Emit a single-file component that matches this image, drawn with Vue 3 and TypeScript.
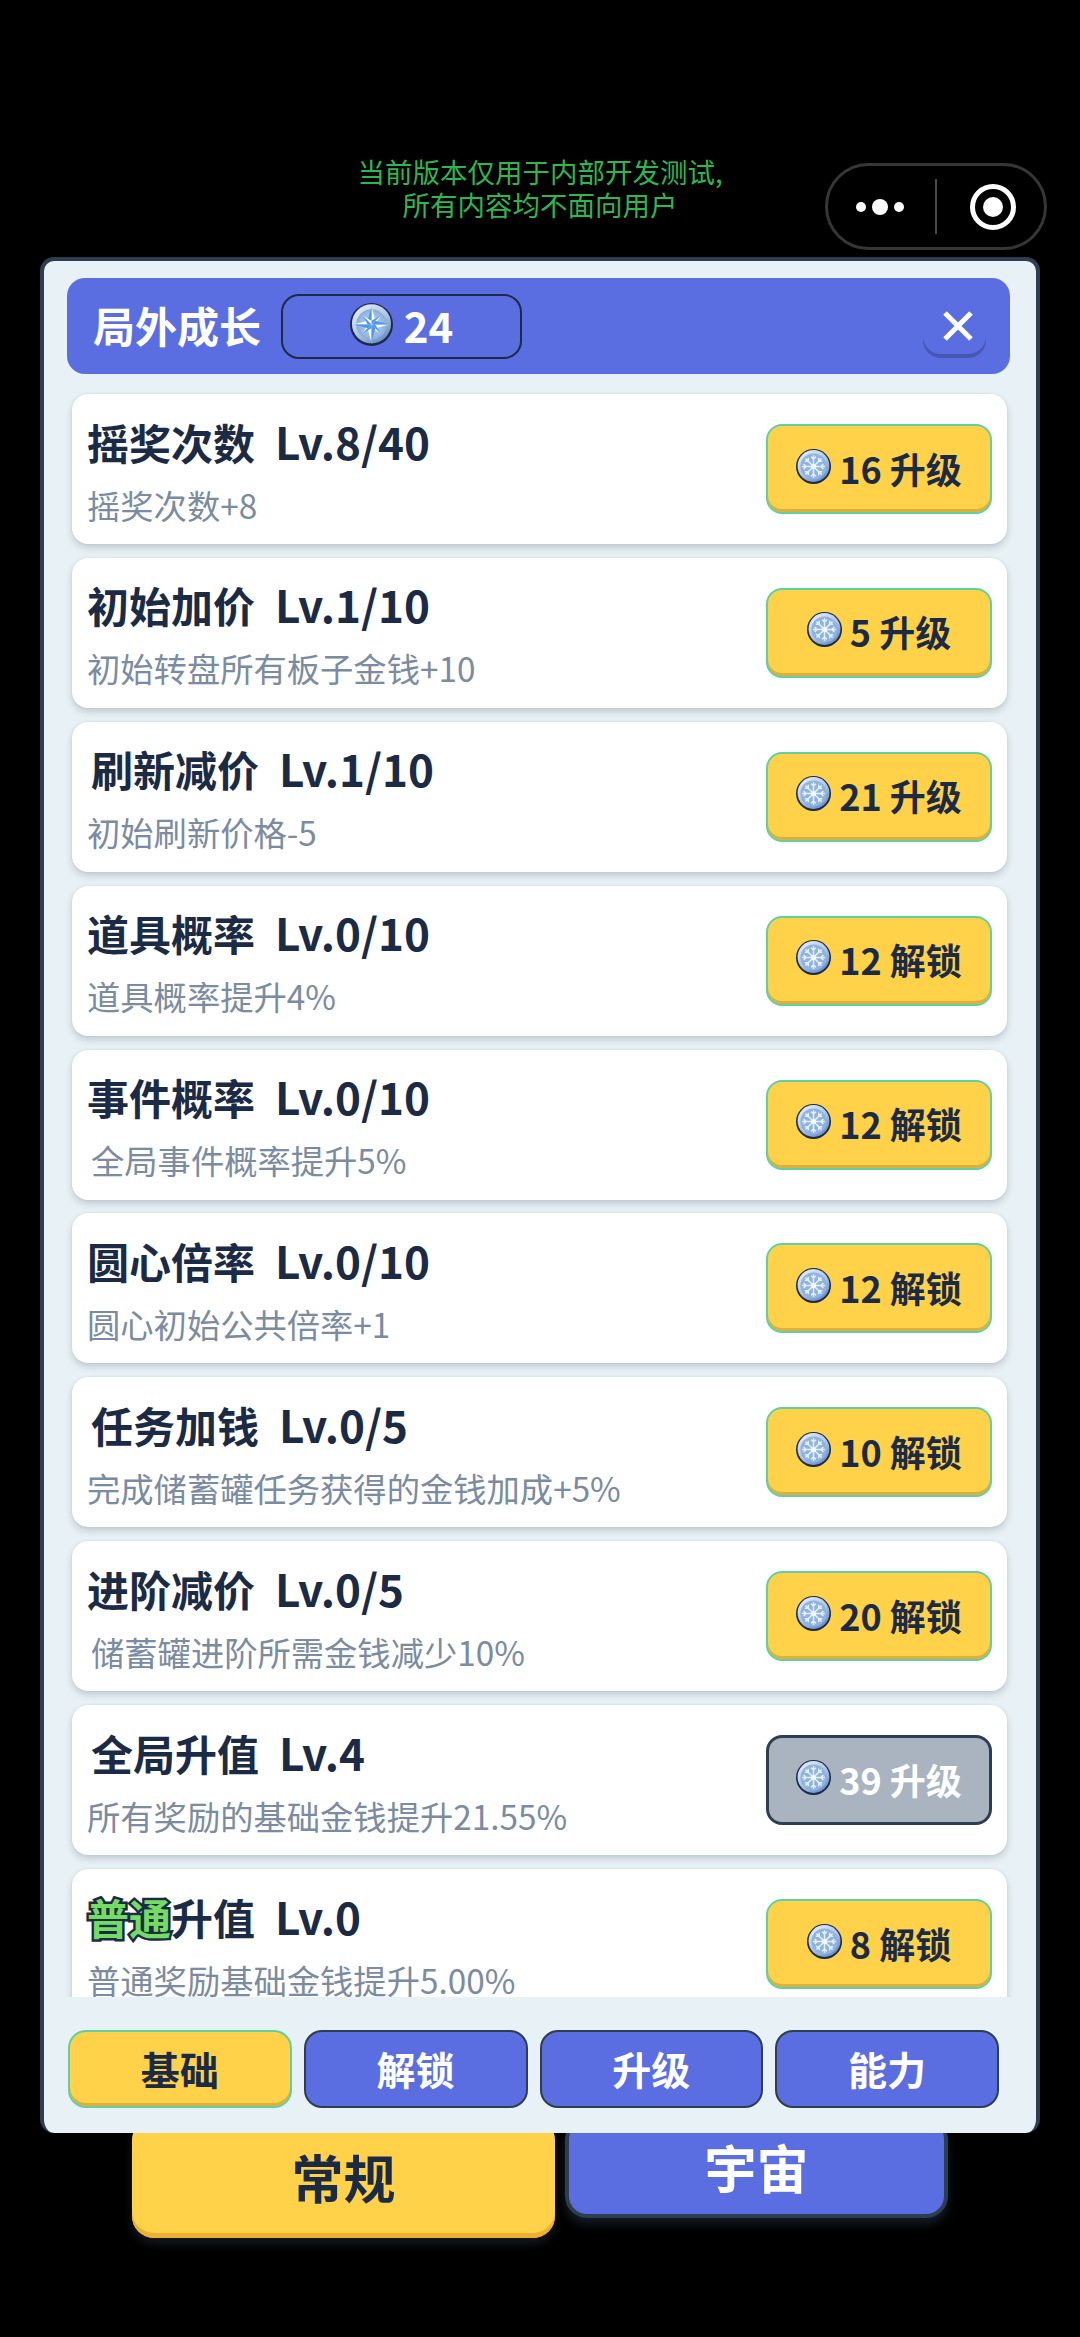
<script setup lang="ts">
interface Upgrade {
  tag?: string
  name: string
  level: string
  desc: string
  cost: number
  action: string
  disabled?: boolean
  shift?: 'title' | 'desc'
}

const upgrades: Upgrade[] = [
  { name: '摇奖次数', level: 'Lv.8/40', desc: '摇奖次数+8', cost: 16, action: '升级' },
  { name: '初始加价', level: 'Lv.1/10', desc: '初始转盘所有板子金钱+10', cost: 5, action: '升级' },
  { name: '刷新减价', level: 'Lv.1/10', desc: '初始刷新价格-5', cost: 21, action: '升级', shift: 'title' },
  { name: '道具概率', level: 'Lv.0/10', desc: '道具概率提升4%', cost: 12, action: '解锁' },
  { name: '事件概率', level: 'Lv.0/10', desc: '全局事件概率提升5%', cost: 12, action: '解锁', shift: 'desc' },
  { name: '圆心倍率', level: 'Lv.0/10', desc: '圆心初始公共倍率+1', cost: 12, action: '解锁' },
  { name: '任务加钱', level: 'Lv.0/5', desc: '完成储蓄罐任务获得的金钱加成+5%', cost: 10, action: '解锁', shift: 'title' },
  { name: '进阶减价', level: 'Lv.0/5', desc: '储蓄罐进阶所需金钱减少10%', cost: 20, action: '解锁', shift: 'desc' },
  { name: '全局升值', level: 'Lv.4', desc: '所有奖励的基础金钱提升21.55%', cost: 39, action: '升级', disabled: true, shift: 'title' },
  { tag: '普通', name: '升值', level: 'Lv.0', desc: '普通奖励基础金钱提升5.00%', cost: 8, action: '解锁' },
]

const tabs = ['基础', '解锁', '升级', '能力']
const activeTab = '基础'
const spokes = [0, 45, 90, 135, 180, 225, 270, 315]
</script>

<template>
  <div class="page">
    <!-- crystal coins: compass star for the balance, snowflake for prices -->
    <svg class="defs" width="0" height="0" aria-hidden="true">
      <defs>
        <linearGradient id="coin-rim" x1="0.15" y1="0" x2="0.85" y2="1">
          <stop offset="0" stop-color="#e6eff8" />
          <stop offset="0.55" stop-color="#a9c2e2" />
          <stop offset="1" stop-color="#5f82bc" />
        </linearGradient>
        <radialGradient id="coin-face" cx="0.5" cy="0.5" r="0.62">
          <stop offset="0" stop-color="#c4dcf6" />
          <stop offset="1" stop-color="#7ba3d8" />
        </radialGradient>
        <symbol id="coin-star" viewBox="0 0 40 40">
          <circle cx="20" cy="20" r="20" fill="#1b2a48" />
          <circle cx="20" cy="19.4" r="18.2" fill="url(#coin-rim)" />
          <circle cx="20" cy="20" r="14.2" fill="url(#coin-face)" />
          <g v-for="angle in spokes" :key="angle" :transform="`rotate(${angle} 20 20)`">
            <path :d="angle % 90 === 0 ? 'M20 3.5 L23.6 16.5 L20 20 Z' : 'M20 8 L22.4 17.5 L20 20 Z'" fill="#ffffff" />
            <path :d="angle % 90 === 0 ? 'M20 3.5 L16.4 16.5 L20 20 Z' : 'M20 8 L17.6 17.5 L20 20 Z'" fill="#4f97ea" />
          </g>
        </symbol>
        <symbol id="coin-flake" viewBox="0 0 40 40">
          <circle cx="20" cy="20" r="20" fill="#1b2a48" />
          <circle cx="20" cy="19.4" r="18.2" fill="url(#coin-rim)" />
          <circle cx="20" cy="20" r="15" fill="#8eb2e2" />
          <g v-for="angle in spokes" :key="angle" :transform="`rotate(${angle} 20 20)`">
            <path d="M20 20 V7 M20 11.5 L17.2 8.8 M20 11.5 L22.8 8.8" stroke="#e6f1fd" stroke-width="1.7" fill="none" />
          </g>
          <circle cx="20" cy="20" r="3" fill="#f4f9ff" />
        </symbol>
      </defs>
    </svg>

    <div class="topbar">
      <div class="notice">当前版本仅用于内部开发测试,<br />所有内容均不面向用户</div>
      <div class="capsule">
        <div class="dots"><i class="dot" /><i class="dot big" /><i class="dot" /></div>
        <div class="divider" />
        <div class="record"><i /></div>
      </div>
    </div>

    <section class="panel">
      <header class="panel-head">
        <h1 class="panel-title">局外成长</h1>
        <div class="balance">
          <svg class="coin-lg"><use href="#coin-star" /></svg>
          <span>24</span>
        </div>
        <button class="close" type="button" aria-label="关闭">
          <svg width="32" height="30" viewBox="0 0 32 30">
            <path d="M3 2 L29 28 M29 2 L3 28" stroke="#fff" stroke-width="5" fill="none" />
          </svg>
        </button>
      </header>

      <div class="list">
        <article v-for="item in upgrades" :key="item.name" class="row">
          <div class="info">
            <div class="title" :class="{ shifted: item.shift === 'title' }">
              <span v-if="item.tag" class="tag">{{ item.tag }}</span><span>{{ item.name }}</span><span class="level">{{ item.level }}</span>
            </div>
            <div class="desc" :class="{ shifted: item.shift === 'desc' }">{{ item.desc }}</div>
          </div>
          <button class="buy" :class="{ disabled: item.disabled }" type="button">
            <svg class="coin-sm"><use href="#coin-flake" /></svg>
            <span>{{ item.cost }} {{ item.action }}</span>
          </button>
        </article>
      </div>

      <nav class="tabs">
        <button
          v-for="tab in tabs"
          :key="tab"
          class="tab"
          :class="{ active: tab === activeTab }"
          type="button"
        >{{ tab }}</button>
      </nav>
    </section>

    <div class="modes">
      <button class="mode normal" type="button">常规</button>
      <button class="mode cosmos" type="button">宇宙</button>
    </div>
  </div>
</template>

<style>
html,
body {
  margin: 0;
  background: #000;
}
</style>

<style scoped>
.page {
  position: relative;
  width: 1080px;
  height: 2337px;
  overflow: hidden;
  background: #000;
  font-family: "Noto Sans CJK SC", "Noto Sans", sans-serif;
  color: #1c2b45;
}

.defs {
  position: absolute;
}

button {
  font-family: inherit;
  cursor: pointer;
}

.topbar {
  display: grid;
  grid-template-columns: 1fr auto 1fr;
  height: 257px;
  box-sizing: border-box;
  padding-top: 155px;
}

.notice {
  grid-column: 2;
  color: #2cb84c;
  font-size: 27.5px;
  line-height: 33px;
  text-align: center;
}

.capsule {
  grid-column: 3;
  justify-self: end;
  display: flex;
  align-items: center;
  box-sizing: border-box;
  width: 222px;
  height: 87px;
  margin: 8px 33px 0 0;
  border: 3px solid #363636;
  border-radius: 44px;
  background: #000;
}

.dots {
  display: flex;
  align-items: center;
  justify-content: space-between;
  width: 48px;
  margin-left: 28px;
}

.dot {
  width: 10px;
  height: 10px;
  border-radius: 50%;
  background: #fff;
}

.dot.big {
  width: 16px;
  height: 16px;
}

.divider {
  width: 2px;
  height: 55px;
  margin-left: 31px;
  background: #4a4a4a;
}

.record {
  display: flex;
  align-items: center;
  justify-content: center;
  box-sizing: border-box;
  width: 46px;
  height: 46px;
  margin-left: 33px;
  border: 5px solid #fff;
  border-radius: 50%;
}

.record i {
  width: 20px;
  height: 20px;
  border-radius: 50%;
  background: #fff;
}

.panel {
  position: relative;
  z-index: 1;
  box-sizing: border-box;
  width: 1000px;
  height: 1876px;
  margin-left: 40px;
  padding-top: 17px;
  border: 4px solid #2c3e50;
  border-bottom: 0;
  border-radius: 14px;
  background: #e8f1f5;
}

.panel-head {
  display: flex;
  align-items: center;
  box-sizing: border-box;
  width: 943px;
  height: 96px;
  margin-left: 23px;
  padding: 0 24px 0 26px;
  border-radius: 18px;
  background: #5b6ee1;
}

.panel-title {
  margin: -3px 0 0;
  color: #fff;
  font-size: 42px;
  font-weight: 700;
  line-height: 60px;
}

.balance {
  display: flex;
  align-items: center;
  justify-content: center;
  gap: 11px;
  box-sizing: border-box;
  width: 241px;
  height: 65px;
  margin-left: 20px;
  border: 2.5px solid #1c2b45;
  border-radius: 18px;
  color: #fff;
  font-size: 42px;
  font-weight: 700;
}

.balance span {
  margin-top: -3px;
}

.coin-lg {
  width: 43px;
  height: 43px;
  margin-top: -3px;
}

.close {
  display: flex;
  align-items: center;
  justify-content: center;
  box-sizing: border-box;
  width: 63px;
  height: 64px;
  margin-left: auto;
  padding: 0 0 0 7px;
  border: 0;
  border-radius: 18px;
  background: #5b6ee1;
  box-shadow: inset 0 -4px 0 #4856b4;
}

.list {
  box-sizing: border-box;
  height: 1623px;
  padding: 20px 29px 0 28px;
  overflow: hidden;
  display: flex;
  flex-direction: column;
  gap: 13.9px;
}

.row {
  display: flex;
  flex: none;
  align-items: center;
  justify-content: space-between;
  box-sizing: border-box;
  height: 150px;
  padding: 0 15px 0 15px;
  border-radius: 16px;
  background: #fff;
  box-shadow: 0 0 2px rgba(44, 62, 80, 0.12), 0 4px 7px rgba(44, 62, 80, 0.2);
}

.info {
  display: flex;
  flex-direction: column;
  gap: 14px;
  margin-top: 2px;
}

.title {
  font-size: 42px;
  font-weight: 700;
  line-height: 54px;
  white-space: nowrap;
}

.level {
  margin-left: 20px;
  font-size: 44px;
}

.tag {
  color: #74dc62;
  -webkit-text-stroke: 5px #1c2b45;
  paint-order: stroke fill;
}

.desc {
  color: #7b8ba2;
  font-size: 33.3px;
  line-height: 44px;
  white-space: nowrap;
}

.shifted {
  margin-left: 4px;
}

.buy {
  display: flex;
  align-items: center;
  justify-content: center;
  gap: 8px;
  box-sizing: border-box;
  width: 226px;
  height: 90px;
  padding: 0 0 3px;
  border: 2px solid #5fd0a0;
  border-radius: 16px;
  background: #ffd24a;
  box-shadow: inset 0 -3px 0 #dfae3c;
  color: #1c2b45;
  font-size: 36px;
  font-weight: 700;
}

.buy.disabled {
  border: 3px solid #2c3e50;
  background: #a9b4c0;
  box-shadow: none;
  color: #fff;
}

.coin-sm {
  width: 35px;
  height: 35px;
  margin-top: -3px;
}

.tabs {
  display: grid;
  grid-template-columns: repeat(4, 1fr);
  gap: 12px;
  width: 931px;
  margin: 33px 0 0 24px;
}

.tab {
  height: 78px;
  padding: 0 0 2px;
  border: 2.5px solid #2c3e50;
  border-radius: 18px;
  background: #5b6ee1;
  color: #fff;
  font-size: 39px;
  font-weight: 700;
}

.tab.active {
  border: 2px solid #5fd0a0;
  background: #ffd24a;
  box-shadow: inset 0 -3px 0 #dfae3c;
  color: #1c2b45;
}

.modes {
  display: flex;
  align-items: flex-start;
  gap: 10px;
  margin-top: -15px;
  padding-left: 132px;
}

.mode {
  border-radius: 22px;
  font-size: 52px;
  font-weight: 700;
}

.normal {
  width: 423px;
  height: 120px;
  padding: 0 0 4px;
  border: 0;
  background: #ffd24a;
  box-shadow: inset 0 -5px 0 #eeb032, 0 6px 10px rgba(60, 70, 90, 0.35);
  color: #1c2b45;
}

.cosmos {
  width: 383px;
  height: 100px;
  padding: 0;
  border: 4px solid #2c3e50;
  border-top: 0;
  background: #5b6ee1;
  box-shadow: 0 6px 10px rgba(60, 80, 110, 0.35);
  color: #fff;
}
</style>
